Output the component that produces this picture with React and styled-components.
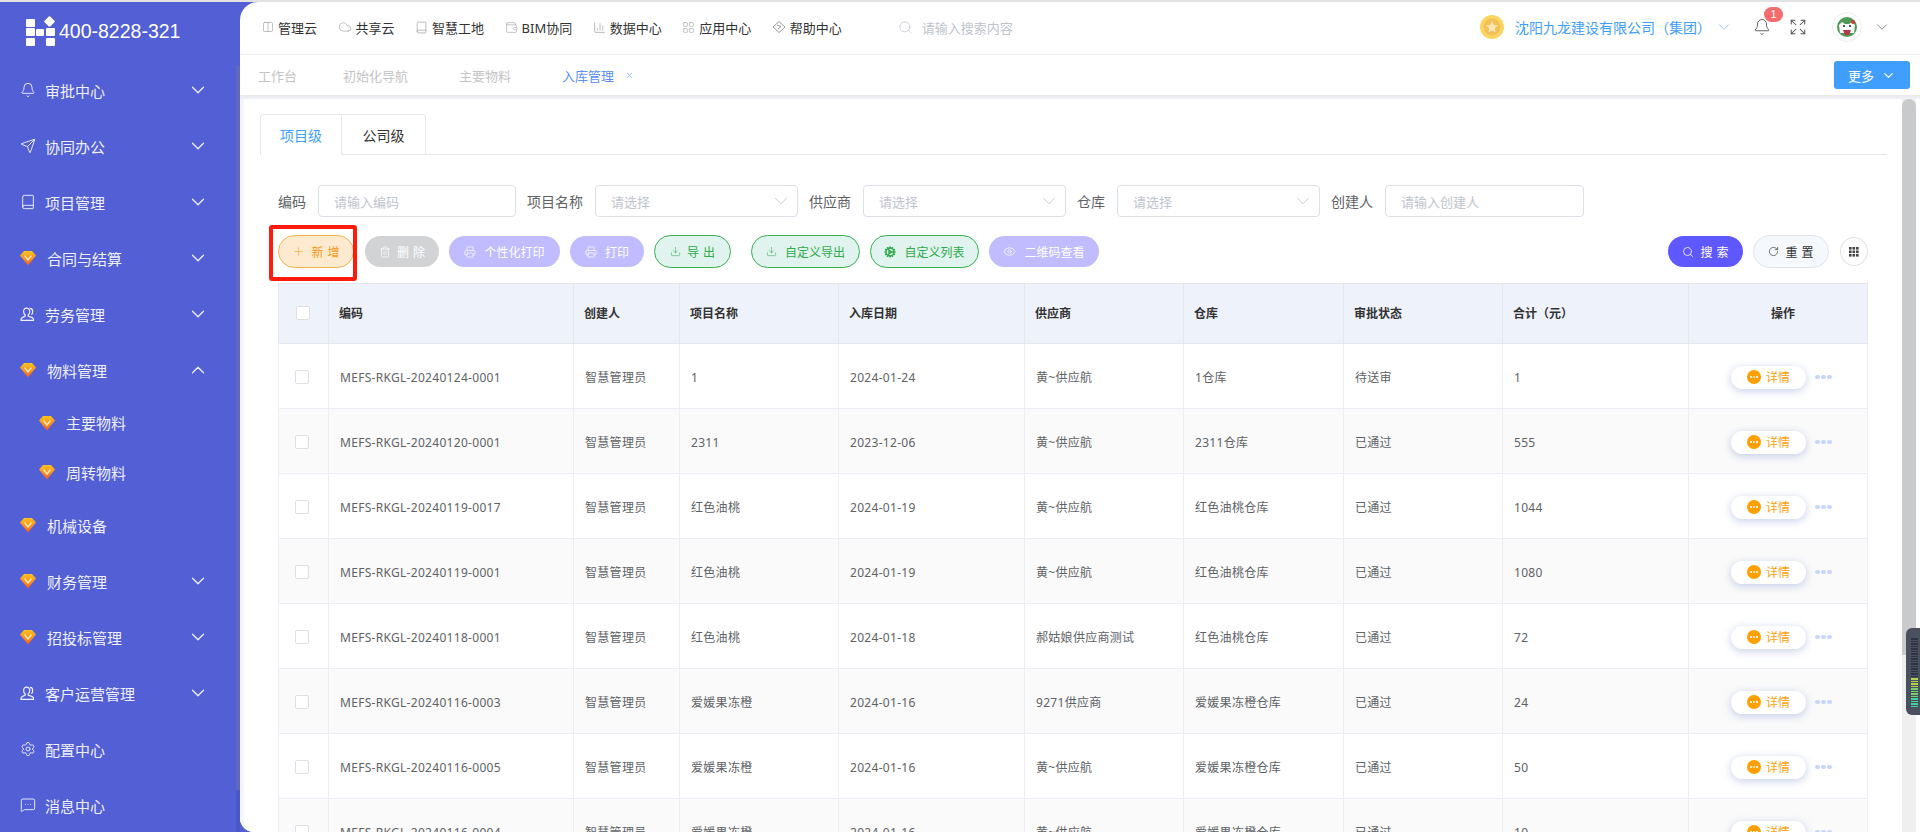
import React from "react";
import styled, { createGlobalStyle } from "styled-components";
import {
  Bell,
  Send,
  Book,
  ChevronDown,
  ChevronUp,
  Settings,
  MessageSquareMore,
  Columns2,
  Cloud,
  Wallet,
  ChartColumn,
  LayoutGrid,
  Search,
  Expand,
  Trash2,
  Printer,
  Download,
  Eye,
  RotateCw,
  Plus,
  Cog,
  X,
} from "lucide-react";

const GlobalStyle = createGlobalStyle`
  html, body, #root { margin: 0; padding: 0; height: 100%; }
  body {
    font-family: "Noto Sans", "Noto Sans CJK SC", sans-serif;
    overflow: hidden;
    background: #fff;
  }
  * { box-sizing: border-box; }
`;

const menus = [
  { name: "审批中心", icon: "bell", arrow: "down" },
  { name: "协同办公", icon: "send", arrow: "down" },
  { name: "项目管理", icon: "book", arrow: "down" },
  { name: "合同与结算", icon: "gem", arrow: "down" },
  { name: "劳务管理", icon: "user", arrow: "down" },
  { name: "物料管理", icon: "gem", arrow: "up", children: ["主要物料", "周转物料"] },
  { name: "机械设备", icon: "gem" },
  { name: "财务管理", icon: "gem", arrow: "down" },
  { name: "招投标管理", icon: "gem", arrow: "down" },
  { name: "客户运营管理", icon: "user", arrow: "down" },
  { name: "配置中心", icon: "gear" },
  { name: "消息中心", icon: "msg" },
];

const rows = [
  ["MEFS-RKGL-20240124-0001", "智慧管理员", "1", "2024-01-24", "黄~供应航", "1仓库", "待送审", "1"],
  ["MEFS-RKGL-20240120-0001", "智慧管理员", "2311", "2023-12-06", "黄~供应航", "2311仓库", "已通过", "555"],
  ["MEFS-RKGL-20240119-0017", "智慧管理员", "红色油桃", "2024-01-19", "黄~供应航", "红色油桃仓库", "已通过", "1044"],
  ["MEFS-RKGL-20240119-0001", "智慧管理员", "红色油桃", "2024-01-19", "黄~供应航", "红色油桃仓库", "已通过", "1080"],
  ["MEFS-RKGL-20240118-0001", "智慧管理员", "红色油桃", "2024-01-18", "郝姑娘供应商测试", "红色油桃仓库", "已通过", "72"],
  ["MEFS-RKGL-20240116-0003", "智慧管理员", "爱媛果冻橙", "2024-01-16", "9271供应商", "爱媛果冻橙仓库", "已通过", "24"],
  ["MEFS-RKGL-20240116-0005", "智慧管理员", "爱媛果冻橙", "2024-01-16", "黄~供应航", "爱媛果冻橙仓库", "已通过", "50"],
  ["MEFS-RKGL-20240116-0004", "智慧管理员", "爱媛果冻橙", "2024-01-16", "黄~供应航", "爱媛果冻橙仓库", "已通过", "10"],
];

const columns = [
  ["编码", 245],
  ["创建人", 106],
  ["项目名称", 159],
  ["入库日期", 186],
  ["供应商", 159],
  ["仓库", 160],
  ["审批状态", 159],
  ["合计（元）", 186],
];

function Logo() {
  return (
    <svg width="30" height="32" viewBox="0 0 30 32" fill="#fff">
      <rect x="0" y="3" width="9" height="8" rx="1" />
      <rect x="0" y="12" width="9" height="8" rx="1" />
      <rect x="10" y="13" width="8" height="7" rx="1" />
      <rect x="20" y="12" width="9" height="8" rx="1" />
      <rect x="0" y="22" width="9" height="8" rx="1" />
      <rect x="20" y="22" width="9" height="8" rx="1" />
      <rect x="19.5" y="1.5" width="8" height="8" rx="1" transform="rotate(45 23.5 5.5)" />
    </svg>
  );
}

function GemIcon() {
  return (
    <svg width="16" height="16" viewBox="0 0 16 16">
      <defs>
        <linearGradient id="gem" x1="0" y1="0" x2="0" y2="1">
          <stop offset="0" stopColor="#ffc21f" />
          <stop offset="0.6" stopColor="#f98a1c" />
          <stop offset="1" stopColor="#f0562a" />
        </linearGradient>
      </defs>
      <path d="M4 1h8l4 4.5L8 15.5 0 5.5z" fill="url(#gem)" />
      <path d="M4.5 5.5L8 10l3.5-4.5" fill="none" stroke="#ffe9b8" strokeWidth="1.4" />
    </svg>
  );
}

function PersonIcon() {
  return (
    <svg width="16" height="15" viewBox="0 0 16 15" fill="none" stroke="#eef0ff" strokeWidth="1.2">
      <path d="M6.5 1.2c2 0 3.2 1.400 3.200 3.300 0 1.500-.6 2.700-1.500 3.400v1.200l4 1.500c.8.3 1.300 1 1.300 1.800v.9H1v-.9c0-.8.500-1.500 1.300-1.800l2.900-1.500V7.900C4.200 7.200 3.600 6 3.600 4.500c0-1.900 1-3.300 2.900-3.300z" />
      <path d="M10 1.400c1.700.2 2.700 1.500 2.700 3.100 0 1.300-.5 2.400-1.300 3.100" />
    </svg>
  );
}

function MenuIcon({ type }) {
  if (type === "gem") return <GemIcon />;
  if (type === "user") return <PersonIcon />;
  if (type === "bell") return <Bell size={16} strokeWidth={1.4} />;
  if (type === "send") return <Send size={16} strokeWidth={1.4} />;
  if (type === "book") return <Book size={16} strokeWidth={1.4} />;
  if (type === "gear") return <Settings size={16} strokeWidth={1.4} />;
  return <MessageSquareMore size={16} strokeWidth={1.4} />;
}

function Coin() {
  return (
    <svg width="24" height="24" viewBox="0 0 24 24">
      <circle cx="12" cy="12" r="12" fill="#fbd55f" />
      <circle cx="12" cy="12" r="8.5" fill="#f3bf57" />
      <path d="M12 6l1.800 3.900 4.200.5-3.100 2.900.8 4.200L12 15.400l-3.700 2.100.8-4.200L6 10.400l4.200-.5z" fill="#fbe7b4" />
    </svg>
  );
}

function AvatarPic() {
  return (
    <svg width="30" height="30" viewBox="0 0 30 30">
      <circle cx="15" cy="15" r="14.500" fill="#fff" stroke="#eeeeee" />
      <circle cx="15" cy="15" r="10" fill="#4d9a55" />
      <path d="M7 13l3-3 3 2h4l3-2 3 3-1 8H8z" fill="#ffffff" />
      <circle cx="12" cy="14" r="1" fill="#222" />
      <circle cx="18" cy="14" r="1" fill="#222" />
      <path d="M11 18h8l-2 5h-4z" fill="#b23a48" />
      <circle cx="21" cy="10" r="2" fill="#d43c3c" />
    </svg>
  );
}

function HelpIcon() {
  return (
    <svg width="14" height="14" viewBox="0 0 14 14" fill="none" stroke="#9a9a9a" strokeWidth="1">
      <path d="M7 1.500L13 7l-6 5.500L1 7z" />
      <path d="M5 5l4 1.500L6 9" />
    </svg>
  );
}

function DetailIcon() {
  return (
    <svg width="14" height="14" viewBox="0 0 14 14">
      <circle cx="7" cy="7" r="7" fill="#ffa000" />
      <circle cx="4" cy="7" r="1" fill="#fff" />
      <circle cx="7" cy="7" r="1" fill="#fff" />
      <circle cx="10" cy="7" r="1" fill="#fff" />
    </svg>
  );
}

function GridDots() {
  return (
    <svg width="10" height="10" viewBox="0 0 10 10" fill="#444">
      {[0, 3.500, 7].map((y) =>
        [0, 3.500, 7].map((x) => <rect key={`${x}-${y}`} x={x} y={y} width="2.600" height="2.600" />)
      )}
    </svg>
  );
}

function Meter() {
  const bars = [];
  for (let i = 0; i < 28; i++) {
    let c = "#2f3340";
    if (i >= 16) c = i < 20 ? "#b5d34a" : i < 24 ? "#72d06a" : "#3fd0a0";
    bars.push(<MeterBar key={i} style={{ background: c }} />);
  }
  return <MeterBox>{bars}</MeterBox>;
}

function SelectBox({ width }) {
  return (
    <FieldBox $w={width}>
      <Placeholder>请选择</Placeholder>
      <ChevronDown size={22} strokeWidth={0.9} color="#c0c4cc" />
    </FieldBox>
  );
}

function Field({ label, width, text, select }) {
  return (
    <FieldWrap>
      <FieldLabel>{label}</FieldLabel>
      {select ? (
        <SelectBox width={width} />
      ) : (
        <FieldBox $w={width}>
          <Placeholder>{text}</Placeholder>
        </FieldBox>
      )}
    </FieldWrap>
  );
}

export default function App() {
  return (
    <>
      <GlobalStyle />
      <TopStrip />
      <Shell>
        <Sidebar>
          <LogoRow>
            <Logo />
            <Phone>400-8228-321</Phone>
          </LogoRow>
          {menus.map((m) => (
            <React.Fragment key={m.name}>
              <MenuRow>
                <IconSlot $gem={m.icon === "gem"}>
                  <MenuIcon type={m.icon} />
                </IconSlot>
                <MenuText>{m.name}</MenuText>
                {m.arrow === "down" && <ChevronDown size={22} strokeWidth={1.4} />}
                {m.arrow === "up" && <ChevronUp size={22} strokeWidth={1.4} />}
              </MenuRow>
              {m.children &&
                m.children.map((c) => (
                  <SubRow key={c}>
                    <IconSlot $gem>
                      <GemIcon />
                    </IconSlot>
                    <MenuText>{c}</MenuText>
                  </SubRow>
                ))}
            </React.Fragment>
          ))}
          <SideTrack>
            <SideThumb />
          </SideTrack>
        </Sidebar>

        <Main>
          <TopNav>
            <NavItem $ml={22}><Columns2 size={12} strokeWidth={1} color="#888" />管理云</NavItem>
            <NavItem><Cloud size={14} strokeWidth={1} color="#999" />共享云</NavItem>
            <NavItem><Book size={13} strokeWidth={1} color="#888" />智慧工地</NavItem>
            <NavItem><Wallet size={13} strokeWidth={1} color="#999" />BIM协同</NavItem>
            <NavItem><ChartColumn size={13} strokeWidth={1.2} color="#999" />数据中心</NavItem>
            <NavItem><LayoutGrid size={13} strokeWidth={1} color="#999" />应用中心</NavItem>
            <NavItem><HelpIcon />帮助中心</NavItem>
            <SearchBox>
              <Search size={15} strokeWidth={1.2} color="#c0c4cc" />
              请输入搜索内容
            </SearchBox>
            <Company>
              <Coin />
              <CompanyName>沈阳九龙建设有限公司（集团）</CompanyName>
              <ChevronDown size={18} strokeWidth={1} color="#7fb6f2" />
            </Company>
            <BellWrap>
              <Bell size={18} strokeWidth={1} color="#333" />
              <Badge>1</Badge>
            </BellWrap>
            <Expand size={18} strokeWidth={1.4} color="#555" />
            <AvatarWrap>
              <AvatarPic />
              <ChevronDown size={18} strokeWidth={1} color="#666" />
            </AvatarWrap>
          </TopNav>

          <TabBar>
            <PageTab $mr={46}>工作台</PageTab>
            <PageTab>初始化导航</PageTab>
            <PageTab>主要物料</PageTab>
            <PageTab $active>
              入库管理
              <X size={9} strokeWidth={1.5} />
            </PageTab>
            <MoreButton>
              更多
              <ChevronDown size={15} strokeWidth={2} />
            </MoreButton>
          </TabBar>
          <Gap />

          <Body>
            <Panel>
              <LevelTabs>
                <LevelTab $active>项目级</LevelTab>
                <LevelTab $w={84}>公司级</LevelTab>
              </LevelTabs>

              <FilterRow>
                <Field label="编码" width={198} text="请输入编码" />
                <Field label="项目名称" width={203} select />
                <Field label="供应商" width={203} select />
                <Field label="仓库" width={203} select />
                <Field label="创建人" width={199} text="请输入创建人" />
              </FilterRow>

              <Toolbar>
                <Marked>
                  <Pill $kind="orange" $w={76} $spaced>
                    <Plus size={13} strokeWidth={1} />
                    新 增
                  </Pill>
                  <RedFrame />
                </Marked>
                <Pill $kind="gray" $w={74} $spaced>
                  <Trash2 size={12} strokeWidth={1.4} />
                  删 除
                </Pill>
                <Pill $kind="violet" $w={111}>
                  <Printer size={12} strokeWidth={1.4} />
                  个性化打印
                </Pill>
                <Pill $kind="violet" $w={74}>
                  <Printer size={12} strokeWidth={1.4} />
                  打印
                </Pill>
                <Pill $kind="green" $w={77} $spaced>
                  <Download size={11} strokeWidth={1.2} />
                  导 出
                </Pill>
                <Pill $kind="green" $w={109} $ml={10}>
                  <Download size={11} strokeWidth={1.2} />
                  自定义导出
                </Pill>
                <Pill $kind="green" $w={109}>
                  <Cog size={12} strokeWidth={3} />
                  自定义列表
                </Pill>
                <Pill $kind="violet" $w={110}>
                  <Eye size={13} strokeWidth={1.4} />
                  二维码查看
                </Pill>
                <Pill $kind="blue" $w={75} $spaced $ml="auto">
                  <Search size={12} strokeWidth={1.6} />
                  搜 索
                </Pill>
                <Pill $kind="plain" $w={76} $spaced>
                  <RotateCw size={11} strokeWidth={1.4} />
                  重 置
                </Pill>
                <GridButton>
                  <GridDots />
                </GridButton>
              </Toolbar>

              <Table>
                <colgroup>
                  <col style={{ width: 50 }} />
                  {columns.map(([name, w]) => (
                    <col key={name} style={{ width: w }} />
                  ))}
                  <col style={{ width: 179 }} />
                </colgroup>
                <thead>
                  <tr>
                    <HeadCell><Check /></HeadCell>
                    {columns.map(([name]) => (
                      <HeadCell key={name}>{name}</HeadCell>
                    ))}
                    <HeadCell $center>操作</HeadCell>
                  </tr>
                </thead>
                <tbody>
                  {rows.map((r) => (
                    <BodyRow key={r[0]}>
                      <Cell><Check /></Cell>
                      {r.map((v, i) => (
                        <Cell key={i}>{v}</Cell>
                      ))}
                      <ActionCell>
                        <ActionWrap>
                          <DetailButton>
                            <DetailIcon />
                            详情
                          </DetailButton>
                          <MoreDots>
                            <i /><i /><i />
                          </MoreDots>
                        </ActionWrap>
                      </ActionCell>
                    </BodyRow>
                  ))}
                </tbody>
              </Table>
            </Panel>
            <ScrollTrack>
              <ScrollThumb />
            </ScrollTrack>
            <Meter />
          </Body>
        </Main>
      </Shell>
    </>
  );
}

const TopStrip = styled.div`
  height: 2px;
  background: #e2e2e2;
`;

const Shell = styled.div`
  display: flex;
  height: 830px;
  background: #535fd5;
`;

const Sidebar = styled.aside`
  position: relative;
  width: 240px;
  flex: none;
  color: #eef0ff;
  overflow: hidden;
`;

const LogoRow = styled.div`
  display: flex;
  align-items: center;
  gap: 3px;
  height: 60px;
  padding: 0 0 1px 26px;
`;

const Phone = styled.span`
  font-family: "Liberation Sans", sans-serif;
  font-size: 19.5px;
  color: #fff;
`;

const MenuRow = styled.div`
  display: flex;
  align-items: center;
  height: 56px;
  padding: 0 31px 0 20px;
  svg { flex: none; }
`;

const SubRow = styled(MenuRow)`
  height: 49.5px;
  padding-left: 39px;
`;

const IconSlot = styled.span`
  display: flex;
  width: ${(p) => (p.$gem ? "27px" : "25px")};
`;

const MenuText = styled.span`
  flex: 1;
  font-size: 15px;
`;

const SideTrack = styled.div`
  position: absolute;
  right: 0;
  top: 64px;
  bottom: 0;
  width: 4px;
  background: #4c57c6;
`;

const SideThumb = styled.div`
  height: 724px;
  background: #6168c2;
`;

const Main = styled.main`
  flex: 1;
  min-width: 0;
  display: flex;
  flex-direction: column;
  background: #fff;
  border-radius: 18px 0 0 14px;
  overflow: hidden;
`;

const TopNav = styled.header`
  display: flex;
  align-items: center;
  height: 53px;
  flex: none;
  border-bottom: 1px solid #f0f0f0;
  padding-bottom: 2px;
  font-size: 13px;
  color: #333;
`;

const NavItem = styled.span`
  display: flex;
  align-items: center;
  gap: 4px;
  margin-left: ${(p) => (p.$ml ? p.$ml : 20.5)}px;
  white-space: nowrap;
`;

const SearchBox = styled.div`
  display: flex;
  align-items: center;
  gap: 9px;
  margin-left: 56px;
  color: #c0c4cc;
`;

const Company = styled.div`
  display: flex;
  align-items: center;
  margin-left: auto;
`;

const CompanyName = styled.span`
  margin: 0 4px 0 11px;
  font-size: 14px;
  color: #409eff;
  white-space: nowrap;
`;

const BellWrap = styled.div`
  position: relative;
  display: flex;
  margin: 0 18px 0 20px;
`;

const Badge = styled.span`
  position: absolute;
  left: 11px;
  top: -11px;
  width: 19px;
  height: 15px;
  border-radius: 8px;
  background: #f56c6c;
  color: #fff;
  font-family: "Liberation Sans", sans-serif;
  font-size: 11px;
  line-height: 15px;
  text-align: center;
`;

const AvatarWrap = styled.div`
  display: flex;
  align-items: center;
  gap: 11px;
  margin: 0 29px 0 25px;
`;

const TabBar = styled.nav`
  display: flex;
  align-items: center;
  height: 40px;
  flex: none;
  padding: 0 10px 0 18px;
  box-shadow: 0 2px 4px rgba(0, 0, 0, 0.06);
  position: relative;
  font-size: 13px;
`;

const PageTab = styled.span`
  display: flex;
  align-items: center;
  gap: 11px;
  margin-right: ${(p) => p.$mr || 51}px;
  color: ${(p) => (p.$active ? "#5b8ff5" : "#c4c4c4")};
  white-space: nowrap;
`;

const MoreButton = styled.button`
  display: flex;
  align-items: center;
  justify-content: center;
  gap: 7px;
  width: 76px;
  height: 28px;
  margin-left: auto;
  border: 0;
  border-radius: 3px;
  background: #409eff;
  color: #fff;
  font: inherit;
`;

const Gap = styled.div`
  height: 4px;
  flex: none;
  background: #f3f4f7;
`;

const Body = styled.div`
  position: relative;
  flex: 1;
  min-height: 0;
  display: flex;
  padding-left: 4px;
  background: linear-gradient(to right, #f5f6fa 4px, #fff 4px);
`;

const Panel = styled.section`
  width: 1658px;
  flex: none;
  padding: 15px 15px 0 16px;
  overflow: hidden;
`;

const LevelTabs = styled.div`
  display: flex;
  height: 41px;
  border-bottom: 1px solid #e4e7ed;
`;

const LevelTab = styled.div`
  width: ${(p) => p.$w || 82}px;
  height: ${(p) => (p.$active ? "41px" : "40px")};
  display: flex;
  align-items: center;
  justify-content: center;
  border: 1px solid #e4e7ed;
  border-bottom: 0;
  border-left-width: ${(p) => (p.$active ? "1px" : "0")};
  border-radius: ${(p) => (p.$active ? "4px 0 0 0" : "0 4px 0 0")};
  background: #fff;
  font-size: 14px;
  color: ${(p) => (p.$active ? "#409eff" : "#333")};
`;

const FilterRow = styled.div`
  display: flex;
  gap: 11px;
  margin: 30px 0 0 18px;
`;

const FieldWrap = styled.div`
  display: flex;
  align-items: center;
  gap: 12px;
`;

const FieldLabel = styled.label`
  font-size: 14px;
  color: #606266;
  white-space: nowrap;
`;

const FieldBox = styled.div`
  display: flex;
  align-items: center;
  justify-content: space-between;
  width: ${(p) => p.$w}px;
  height: 32px;
  padding: 0 5px 0 15px;
  border: 1px solid #dcdfe6;
  border-radius: 4px;
`;

const Placeholder = styled.span`
  font-size: 13px;
  color: #c0c4cc;
`;

const Toolbar = styled.div`
  display: flex;
  align-items: center;
  gap: 10px;
  height: 33px;
  margin: 18px 19px 15px 18px;
`;

const pillColors = {
  orange: "background:#feebcf;border:1px solid #f5b24c;color:#f09a1a;height:33px;",
  gray: "background:#d2d3d5;color:#fff;height:31px;",
  violet: "background:#c0bcff;color:#fff;height:31px;",
  green: "background:#e1f3ef;border:1px solid #34b04e;color:#2eab4a;height:33px;",
  blue: "background:#5f57ff;color:#fff;height:31px;",
  plain: "background:#f5f8fc;border:1px solid #dfe3ea;color:#333;height:33px;",
};

const Pill = styled.button`
  display: flex;
  align-items: center;
  justify-content: center;
  gap: ${(p) => (p.$spaced ? "6px" : "8px")};
  width: ${(p) => p.$w}px;
  flex: none;
  padding: 0;
  border: 0;
  border-radius: 17px;
  font-family: inherit;
  font-size: 12px;
  white-space: pre;
  word-spacing: 1px;
  margin-left: ${(p) => (p.$ml === "auto" ? "auto" : `${p.$ml || 0}px`)};
  ${(p) => pillColors[p.$kind]}
`;

const Marked = styled.div`
  position: relative;
  display: flex;
  margin-right: 1px;
`;

const RedFrame = styled.span`
  position: absolute;
  left: -9px;
  top: -10px;
  width: 88px;
  height: 56px;
  border: 4px solid #ff1a0e;
  border-radius: 3px;
  pointer-events: none;
`;

const GridButton = styled.button`
  display: flex;
  align-items: center;
  justify-content: center;
  width: 28px;
  height: 29px;
  flex: none;
  padding: 0;
  margin-left: 1px;
  border: 1px solid #dfe3ea;
  border-radius: 50%;
  background: #fff;
`;

const Table = styled.table`
  width: 1589px;
  margin-left: 18px;
  table-layout: fixed;
  border-collapse: collapse;
  font-size: 12px;
`;

const HeadCell = styled.th`
  height: 60px;
  padding: 0 0 2px 10px;
  background: #eef2fb;
  border: 1px solid #e4e7ed;
  color: #333;
  font-weight: 600;
  text-align: ${(p) => (p.$center ? "center" : "left")};
  &:first-child { padding-left: 17px; }
`;

const BodyRow = styled.tr`
  &:nth-child(even) td { background: #fafafa; }
`;

const Cell = styled.td`
  height: 65px;
  padding: 2px 0 0 11px;
  border: 1px solid #eceef6;
  color: #606266;
  letter-spacing: 0.3px;
  white-space: nowrap;
  &:first-child { padding-left: 16px; }
`;

const ActionCell = styled(Cell)`
  padding-left: 42px;
  letter-spacing: 0;
`;

const Check = styled.span`
  display: block;
  width: 14px;
  height: 14px;
  border: 1px solid #dcdfe6;
  border-radius: 2px;
  background: #fff;
`;

const ActionWrap = styled.div`
  display: flex;
  align-items: center;
  gap: 9px;
`;

const DetailButton = styled.span`
  display: flex;
  align-items: center;
  justify-content: center;
  gap: 5px;
  width: 75px;
  height: 23px;
  border-radius: 12px;
  background: #fff;
  color: #ff9f0a;
  box-shadow: 0 2px 8px rgba(110, 135, 200, 0.4);
`;

const MoreDots = styled.span`
  display: flex;
  gap: 1.5px;
  i {
    width: 4.500px;
    height: 4.500px;
    border-radius: 50%;
    background: #c5d6ff;
  }
`;

const ScrollTrack = styled.div`
  width: 14px;
  flex: none;
  background: #efefef;
`;

const ScrollThumb = styled.div`
  height: 556px;
  border-radius: 7px 7px 0 0;
  background: #c9cacc;
`;

const MeterBox = styled.div`
  position: absolute;
  left: 1666px;
  top: 529px;
  width: 18px;
  height: 87px;
  padding: 10px 5px 0 5px;
  display: flex;
  flex-direction: column;
  gap: 1px;
  border-radius: 6px 0 0 6px;
  background: #4b505f;
`;

const MeterBar = styled.span`
  display: block;
  height: 1.500px;
  width: 7px;
  flex: none;
`;
